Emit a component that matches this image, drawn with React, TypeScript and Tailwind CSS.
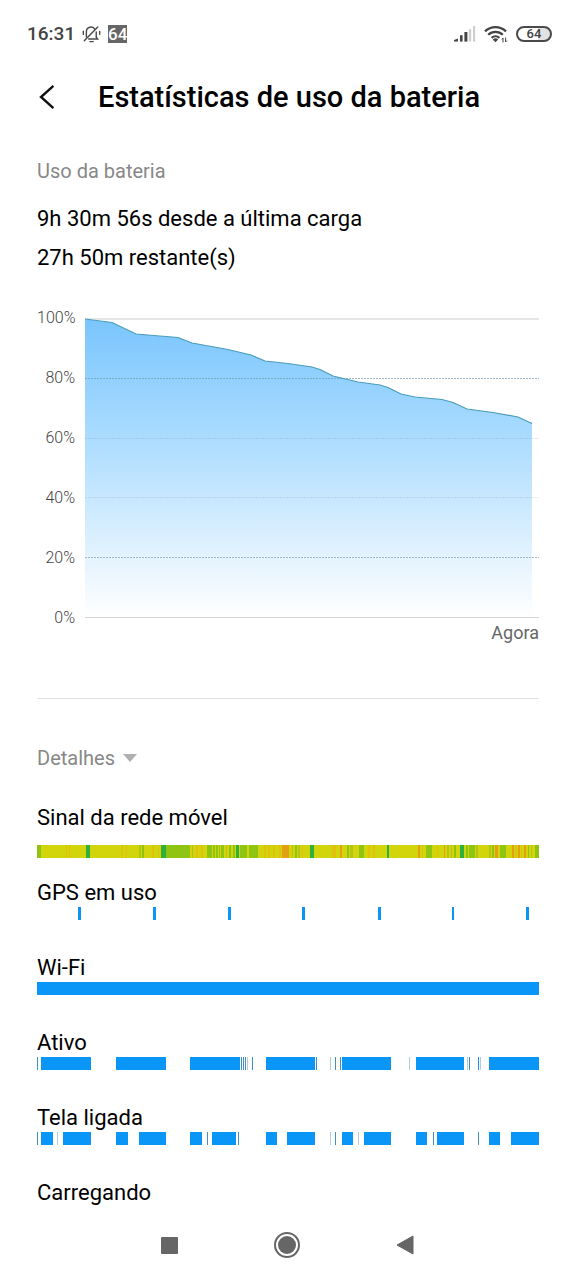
import { useState } from 'react';
import clsx from 'clsx';

type Segment = [start: number, end: number, color?: string];

interface Track {
  label: string;
  segments: Segment[];
  spaced?: boolean;
}

const TRACK_WIDTH = 502;

const BLUE = '#0a96f6';
const THIN = '#3f8fc0';
const FAINT = '#b4cdd6';

const LIME = '#d2d50c';
const GREEN = '#8fc412';
const STRONG = '#2fb03a';
const OLIVE = '#b4c416';
const AMBER = '#e0c20e';
const ORANGE = '#e3a012';

const levels = ['100%', '80%', '60%', '40%', '20%', '0%'];

const curve = [
  [0, 0], [27, 3.5], [51, 15], [93, 18.5], [107, 24], [143, 30.5], [166, 36], [180, 42],
  [203, 44.5], [227, 48], [235, 50.5], [248, 57], [273, 63], [295, 66], [303, 68.5],
  [316, 75], [330, 78], [357, 80.5], [368, 83.5], [382, 90], [408, 93.5], [433, 98], [447, 104.5],
];

const tracks: Track[] = [
  {
    label: 'Sinal da rede móvel',
    spaced: true,
    segments: [
      [0, 502, LIME],
      [0, 4, GREEN], [29, 30, AMBER], [32, 33, AMBER], [49, 53, STRONG], [84, 86, AMBER],
      [89, 90, AMBER], [102, 104, OLIVE], [105, 107, GREEN], [115, 117, AMBER], [121, 122, AMBER],
      [124, 129, STRONG], [129, 153, GREEN], [155, 156, OLIVE], [159, 161, AMBER], [164, 166, AMBER],
      [170, 175, GREEN], [176, 178, GREEN], [179, 181, GREEN], [182, 183, GREEN], [184, 187, GREEN],
      [189, 190, OLIVE], [192, 194, GREEN], [196, 198, GREEN], [199, 202, STRONG], [203, 210, GREEN],
      [212, 221, GREEN], [227, 229, AMBER], [231, 233, AMBER], [236, 238, AMBER], [242, 244, AMBER],
      [245, 252, ORANGE], [255, 256, OLIVE], [258, 260, GREEN], [261, 263, OLIVE], [265, 266, AMBER],
      [273, 277, STRONG], [295, 299, AMBER], [303, 305, ORANGE], [310, 312, GREEN], [313, 316, OLIVE],
      [322, 327, GREEN], [331, 333, AMBER], [336, 338, AMBER], [350, 352, STRONG], [381, 383, ORANGE],
      [385, 386, AMBER], [389, 395, GREEN], [400, 401, AMBER], [407, 408, ORANGE], [410, 412, OLIVE],
      [414, 415, OLIVE], [417, 419, GREEN], [423, 427, STRONG], [429, 431, GREEN], [432, 438, GREEN],
      [439, 441, OLIVE], [452, 454, OLIVE], [455, 457, GREEN], [458, 461, ORANGE], [463, 469, GREEN],
      [475, 477, ORANGE], [478, 480, AMBER], [481, 483, ORANGE], [484, 485, AMBER], [487, 489, ORANGE],
      [491, 492, GREEN], [494, 495, OLIVE], [498, 502, GREEN],
    ],
  },
  {
    label: 'GPS em uso',
    segments: [[41, 44], [116, 119], [191, 194], [265, 268], [341, 344], [415, 417], [489, 492]],
  },
  { label: 'Wi-Fi', segments: [[0, 502]] },
  {
    label: 'Ativo',
    segments: [
      [0, 1, THIN], [4, 54], [79, 129], [153, 203], [204, 205, THIN], [206, 207, THIN],
      [208, 209, THIN], [210, 211, FAINT], [215, 216, THIN], [229, 278], [279, 280, THIN],
      [293, 294, FAINT], [298, 299, THIN], [303, 304, THIN], [305, 354], [372, 373, FAINT],
      [379, 427], [430, 431, FAINT], [432, 433, THIN], [441, 442, BLUE], [443, 444, FAINT],
      [452, 502],
    ],
  },
  {
    label: 'Tela ligada',
    segments: [
      [0, 1, THIN], [4, 16], [20, 21, FAINT], [26, 54], [79, 91], [102, 129], [153, 165],
      [170, 171, THIN], [175, 199], [201, 202, THIN], [229, 240], [250, 278], [293, 294, FAINT],
      [298, 299, THIN], [305, 316], [321, 322, FAINT], [327, 354], [379, 390], [396, 397, THIN],
      [400, 427], [441, 442, THIN], [452, 463], [474, 502],
    ],
  },
  { label: 'Carregando', segments: [] },
];

function MutedBellIcon() {
  return (
    <svg className="w-[19px] h-5" viewBox="0 0 20 20" fill="none" stroke="#4a4a4a" strokeWidth="1.5" strokeLinecap="round">
      <path d="M4.6 13.2V7.6a4.8 4.8 0 0 1 9-2.4M15 7.8v5.6l1.4 1.8H7" />
      <path d="M2.4 17 16.6 2.6" />
      <path d="M8.4 18h3.4M1.4 7v3.4M18.6 7.2v3" />
    </svg>
  );
}

function SignalIcon() {
  return (
    <svg className="w-[22px] h-4" viewBox="0 0 22 16">
      <g fill="#444">
        <path d="M0 15.6h4v-3.2l-4 1.7z" />
        <rect x="6" y="9.2" width="2.6" height="6.4" />
        <rect x="10.4" y="6" width="3" height="9.6" />
      </g>
      <g fill="#cfcfcf">
        <rect x="14.8" y="3.2" width="2.4" height="12.4" />
        <rect x="19" y="0" width="2.2" height="15.6" />
      </g>
    </svg>
  );
}

function WifiIcon() {
  return (
    <svg className="w-6 h-[18px]" viewBox="0 0 24 18" fill="none" stroke="#444" strokeWidth="2.2">
      <path d="M1 6.4a15 15 0 0 1 21 0M4.2 9.8a10.6 10.6 0 0 1 14.6 0M7.6 12.8a6 6 0 0 1 7.8 0" />
      <path d="M8.8 14.6 11.5 17.2l2.7-2.6a4 4 0 0 0-5.4 0z" fill="#444" stroke="none" />
      <path d="M19 13v4.4M17.8 14.4 19 13M21.6 12.6V17M22.8 15.6 21.6 17" strokeWidth="1" />
    </svg>
  );
}

function StatusBar() {
  return (
    <div className="flex items-center justify-between h-[68px] pl-[27px] pr-6 text-[#444]">
      <div className="flex items-center gap-[7px]">
        <span className="text-[19px] leading-6 font-medium">16:31</span>
        <MutedBellIcon />
        <span className="flex items-center justify-center w-[19px] h-[18px] bg-[#666] text-white text-[17px] leading-[18px] font-medium">
          64
        </span>
      </div>
      <div className="flex items-center gap-2">
        <SignalIcon />
        <WifiIcon />
        <span className="flex items-center justify-center w-9 h-4 rounded-full border-2 border-[#4a4a4a] bg-[linear-gradient(90deg,#fff_64%,#e2e2e2_64%)] text-[13px] leading-3 font-medium">
          64
        </span>
      </div>
    </div>
  );
}

function BatteryChart() {
  const line = curve.map(([x, y]) => `${x},${y + 1}`).join(' ');

  return (
    <div className="flex gap-[10px] mt-[31px]">
      <div className="flex flex-col justify-between w-[38px] h-80 text-right text-[16px] leading-5 font-light text-[#444]">
        {levels.map((level) => (
          <span key={level}>{level}</span>
        ))}
      </div>
      <div className="flex-1 pt-[10px]">
        <svg className="block w-full h-[301px]" viewBox="0 0 454 301" preserveAspectRatio="none">
          <defs>
            <linearGradient id="charge" gradientUnits="userSpaceOnUse" x1="0" y1="0" x2="0" y2="300">
              <stop offset="0" stopColor="#79c5fd" />
              <stop offset="0.4" stopColor="#abdcff" />
              <stop offset="0.8" stopColor="#e4f3fe" />
              <stop offset="1" stopColor="#ffffff" />
            </linearGradient>
          </defs>
          <rect x="0" y="0" width="454" height="2" fill="#e6e6e6" />
          <polygon points={`${line} 447,300 0,300`} fill="url(#charge)" />
          <g stroke="#6f93aa" strokeDasharray="2 1">
            <line x1="0" x2="454" y1="60.5" y2="60.5" strokeOpacity="0.65" />
            <line x1="0" x2="454" y1="120.5" y2="120.5" strokeOpacity="0.25" />
            <line x1="0" x2="454" y1="179.5" y2="179.5" strokeOpacity="0.2" />
            <line x1="0" x2="454" y1="239.5" y2="239.5" strokeOpacity="0.6" />
          </g>
          <polyline points={line} fill="none" stroke="#4a9cb8" strokeWidth="1.2" />
          <rect x="0" y="299" width="454" height="1" fill="#cfd4d6" />
        </svg>
        <p className="text-right text-[18px] leading-7 text-[#666]">Agora</p>
      </div>
    </div>
  );
}

function TrackRow({ label, segments, spaced }: Track) {
  return (
    <li className="h-[75px] last:h-auto">
      <p className="text-[22px] leading-7">{label}</p>
      {segments.length > 0 && (
        <svg
          className={clsx('block w-full h-[13px]', spaced && 'mt-[13px]')}
          viewBox={`0 0 ${TRACK_WIDTH} 13`}
          preserveAspectRatio="none"
          shapeRendering="crispEdges"
        >
          {segments.map(([start, end, color = BLUE]) => (
            <rect key={`${start}-${end}`} x={start} y="0" width={end - start} height="13" fill={color} />
          ))}
        </svg>
      )}
    </li>
  );
}

function NavBar() {
  return (
    <nav className="flex items-center justify-center gap-[78px] h-[70px] mt-auto pr-[2px] bg-white">
      <button type="button" aria-label="Recentes" className="flex items-center justify-center w-10 h-10">
        <span className="w-[17px] h-[17px] rounded-[1px] bg-[#666]" />
      </button>
      <button type="button" aria-label="Início" className="flex items-center justify-center w-10 h-10">
        <svg className="w-[26px] h-[26px]" viewBox="0 0 26 26">
          <circle cx="13" cy="13" r="12" fill="none" stroke="#666" strokeWidth="2" />
          <circle cx="13" cy="13" r="9" fill="#666" />
        </svg>
      </button>
      <button type="button" aria-label="Voltar" className="flex items-center justify-center w-10 h-10">
        <svg className="w-[18px] h-5" viewBox="0 0 18 20">
          <path d="M1 10 17 1v18z" fill="#666" stroke="#666" strokeLinejoin="round" />
        </svg>
      </button>
    </nav>
  );
}

export default function App() {
  const [open, setOpen] = useState(true);

  return (
    <div className="flex flex-col min-h-screen bg-white text-black font-['Roboto',sans-serif]">
      <StatusBar />

      <header className="flex items-center h-[58px] px-[37px]">
        <button type="button" aria-label="Voltar" className="w-[61px]">
          <svg className="w-5 h-[26px]" viewBox="0 0 20 26" fill="none" stroke="#111" strokeWidth="2.4">
            <path d="M16.4 1.8 4 13l12.4 11.2" />
          </svg>
        </button>
        <h1 className="text-[29px] leading-9 font-medium">Estatísticas de uso da bateria</h1>
      </header>

      <main className="px-[37px]">
        <section className="pt-[31px]">
          <h2 className="text-[20px] leading-7 text-[#888]">Uso da bateria</h2>
          <div className="mt-[14px] text-[22px] leading-[39px]">
            <p>9h 30m 56s desde a última carga</p>
            <p>27h 50m restante(s)</p>
          </div>
          <BatteryChart />
        </section>

        <section className="mt-[51px] border-t border-[#e2e2e2] pt-[45px]">
          <button
            type="button"
            aria-expanded={open}
            onClick={() => setOpen(!open)}
            className="flex items-center gap-2 text-[20px] leading-7 text-[#888]"
          >
            Detalhes
            <svg className="w-[14px] h-2" viewBox="0 0 14 8">
              <path d="M0 0h14L7 8z" fill="#b0b0b0" />
            </svg>
          </button>
          {open && (
            <ul className="mt-8">
              {tracks.map((track) => (
                <TrackRow key={track.label} {...track} />
              ))}
            </ul>
          )}
        </section>
      </main>

      <NavBar />
    </div>
  );
}
